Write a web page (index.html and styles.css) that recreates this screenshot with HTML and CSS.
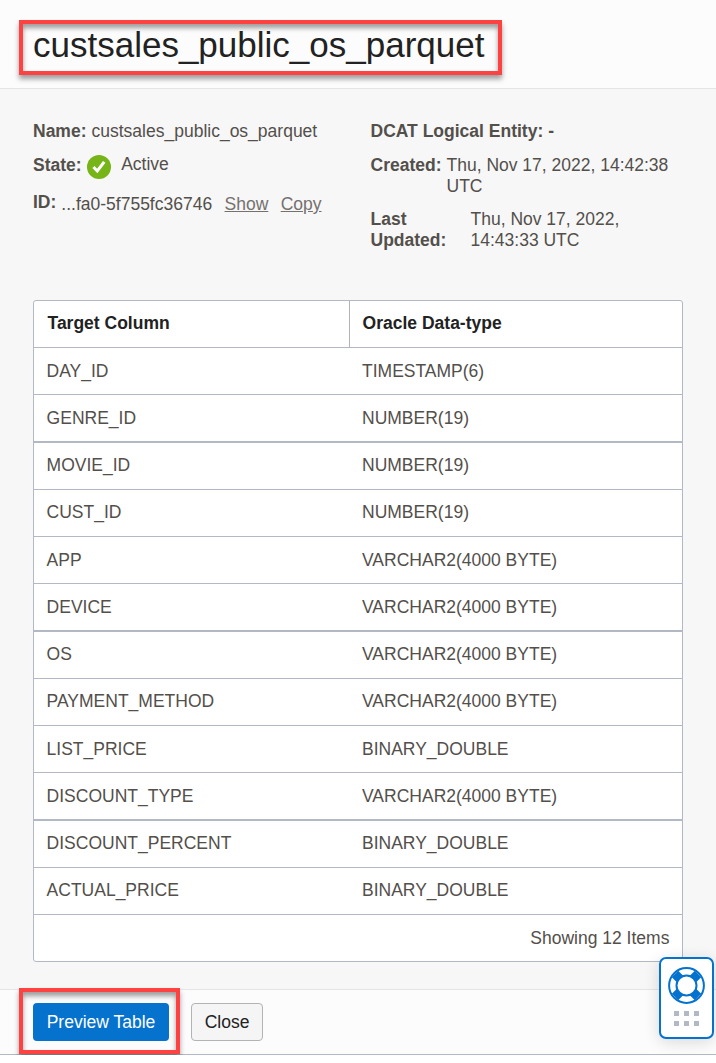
FILE: index.html
```html
<!DOCTYPE html>
<html lang="en">
<head>
<meta charset="utf-8">
<title>custsales_public_os_parquet</title>
<link rel="stylesheet" href="styles.css">
</head>
<body>
<main class="panel">
  <header class="panel-header">
    <h1 class="title highlight">custsales_public_os_parquet</h1>
  </header>
  <section class="panel-body">
    <div class="details">
      <div class="details-col">
        <div class="field"><b>Name:</b><span>custsales_public_os_parquet</span></div>
        <div class="field state">
          <b>State:</b>
          <svg class="check" viewBox="0 0 24 24"><circle cx="12" cy="12" r="12" fill="#76b417"/><path d="M6.4 12l3.9 4 6.9-9.2" fill="none" stroke="#fff" stroke-width="3"/></svg>
          <span class="state-text">Active</span>
        </div>
        <div class="field id"><b>ID:</b><span class="id-value">...fa0-5f755fc36746</span><a class="link">Show</a><a class="link">Copy</a></div>
      </div>
      <div class="details-col">
        <div class="field"><b>DCAT Logical Entity:</b><b>-</b></div>
        <div class="field created"><b>Created:</b><span>Thu, Nov 17, 2022, 14:42:38 UTC</span></div>
        <div class="field updated"><b class="updated-label">Last Updated:</b><span>Thu, Nov 17, 2022, 14:43:33 UTC</span></div>
      </div>
    </div>
    <div class="table">
      <div class="row head"><div class="cell">Target Column</div><div class="cell">Oracle Data-type</div></div>
      <div class="row low"><div class="cell">DAY_ID</div><div class="cell">TIMESTAMP(6)</div></div>
      <div class="row low thick"><div class="cell">GENRE_ID</div><div class="cell">NUMBER(19)</div></div>
      <div class="row"><div class="cell">MOVIE_ID</div><div class="cell">NUMBER(19)</div></div>
      <div class="row"><div class="cell">CUST_ID</div><div class="cell">NUMBER(19)</div></div>
      <div class="row low"><div class="cell">APP</div><div class="cell">VARCHAR2(4000 BYTE)</div></div>
      <div class="row low thick"><div class="cell">DEVICE</div><div class="cell">VARCHAR2(4000 BYTE)</div></div>
      <div class="row"><div class="cell">OS</div><div class="cell">VARCHAR2(4000 BYTE)</div></div>
      <div class="row"><div class="cell">PAYMENT_METHOD</div><div class="cell">VARCHAR2(4000 BYTE)</div></div>
      <div class="row low"><div class="cell">LIST_PRICE</div><div class="cell">BINARY_DOUBLE</div></div>
      <div class="row low thick"><div class="cell">DISCOUNT_TYPE</div><div class="cell">VARCHAR2(4000 BYTE)</div></div>
      <div class="row"><div class="cell">DISCOUNT_PERCENT</div><div class="cell">BINARY_DOUBLE</div></div>
      <div class="row"><div class="cell">ACTUAL_PRICE</div><div class="cell">BINARY_DOUBLE</div></div>
      <div class="summary">Showing 12 Items</div>
    </div>
  </section>
  <footer class="panel-footer">
    <div class="highlight primary-wrap"><button class="btn primary">Preview Table</button></div>
    <button class="btn">Close</button>
  </footer>
</main>
<aside class="help">
  <svg class="help-icon" viewBox="0 0 37 37">
    <path d="M7 7l23 23M30 7L7 30" stroke="#0572ce" stroke-width="9"/>
    <circle cx="18.5" cy="18.5" r="17.4" fill="none" stroke="#0572ce" stroke-width="2"/>
    <circle cx="18.5" cy="18.5" r="10" fill="#fff" stroke="#0572ce" stroke-width="2"/>
  </svg>
  <div class="grip"><i></i><i></i><i></i><i></i><i></i><i></i></div>
</aside>
</body>
</html>
```
FILE: styles.css
```css
* { box-sizing: border-box; }
body {
  margin: 0;
  background: #fff;
  color: #534f4b;
  font: 17.5px/21px "Liberation Sans", Arial, sans-serif;
}
.panel { height: 1055px; display: flex; flex-direction: column; border-bottom: 1px solid #b3b9c4; }
.panel-header {
  height: 89px;
  padding: 20px 0 0 19px;
  background: #fcfcfc;
  border-bottom: 1px solid #e5e5e5;
}
.highlight {
  border: 4px solid #fe4141;
  box-shadow: 0 4px 5px rgba(0,0,0,.38), inset 0 4px 5px rgba(0,0,0,.38);
}
.title {
  width: 483px;
  height: 55px;
  margin: 0;
  padding: 0 0 0 10px;
  color: #222;
  font-size: 35px;
  font-weight: 400;
  line-height: 42px;
}
.panel-body { height: 900px; padding: 32px 33px 0; background: #f7f7f7; }
.details { height: 179px; display: grid; grid-template-columns: 337.5px 312px; }
.field { display: flex; gap: 5px; }
.state { height: 21px; margin-top: 13px; }
.check { width: 24px; height: 24px; flex: none; }
.state-text { margin: -1px 0 0 5.5px; }
.id { margin-top: 16px; }
.id-value { margin-top: 2px; }
.link { margin: 2px 0 0 7.4px; color: #75716e; text-decoration: underline; }
.created { margin-top: 13px; padding-right: 10px; }
.updated { margin-top: 12px; }
.updated-label { width: 95px; flex: none; padding-right: 18px; }
.table { border: 1px solid #b3b9c4; border-radius: 3px; background: #fff; }
.row {
  height: 47px;
  display: grid;
  grid-template-columns: 315px 1fr;
  border-bottom: 1px solid #b3b9c4;
}
.row.thick { height: 48px; border-bottom-width: 2px; }
.cell { padding: 12px 12.6px 0; }
.cell:last-child { padding-left: 13px; }
.low .cell { padding-top: 13px; }
.head .cell { padding: 12px 13.5px 0; color: #222; font-weight: 700; }
.head { grid-template-columns: 316px 1fr; }
.head .cell:first-child { border-right: 1px solid #b3b3b3; }
.head .cell:last-child { padding-left: 12.6px; }
.summary { height: 46px; padding: 13px 12.6px 0; text-align: right; }
.panel-footer {
  flex: 1;
  display: flex;
  align-items: flex-start;
  gap: 11px;
  padding: 13px 0 0 19px;
  background: #fcfcfc;
  border-top: 1px solid #e5e5e5;
}
.primary-wrap { width: 161px; height: 66px; margin-top: -15px; padding: 11px 10px; }
.btn {
  height: 38px;
  width: 72px;
  padding: 0;
  border: 1px solid #b3b3b3;
  border-radius: 4px;
  background: #f5f5f5;
  color: #222;
  font: inherit;
}
.btn.primary { width: 136px; border: 0; background: #0572ce; color: #fff; }
.help {
  position: absolute;
  left: 659px;
  top: 957px;
  width: 55px;
  height: 82px;
  padding: 7.5px 7px 0;
  border: 2px solid #0572ce;
  border-radius: 7px;
  background: #fff;
  box-shadow: 0 3px 16px rgba(0,0,0,.14);
}
.help-icon { display: block; width: 37px; height: 37px; }
.grip { display: grid; grid-template-columns: repeat(3, 5px); gap: 5px; margin: 7.5px 0 0 6px; }
.grip i { width: 5px; height: 5px; background: #b3b9c4; }
```
